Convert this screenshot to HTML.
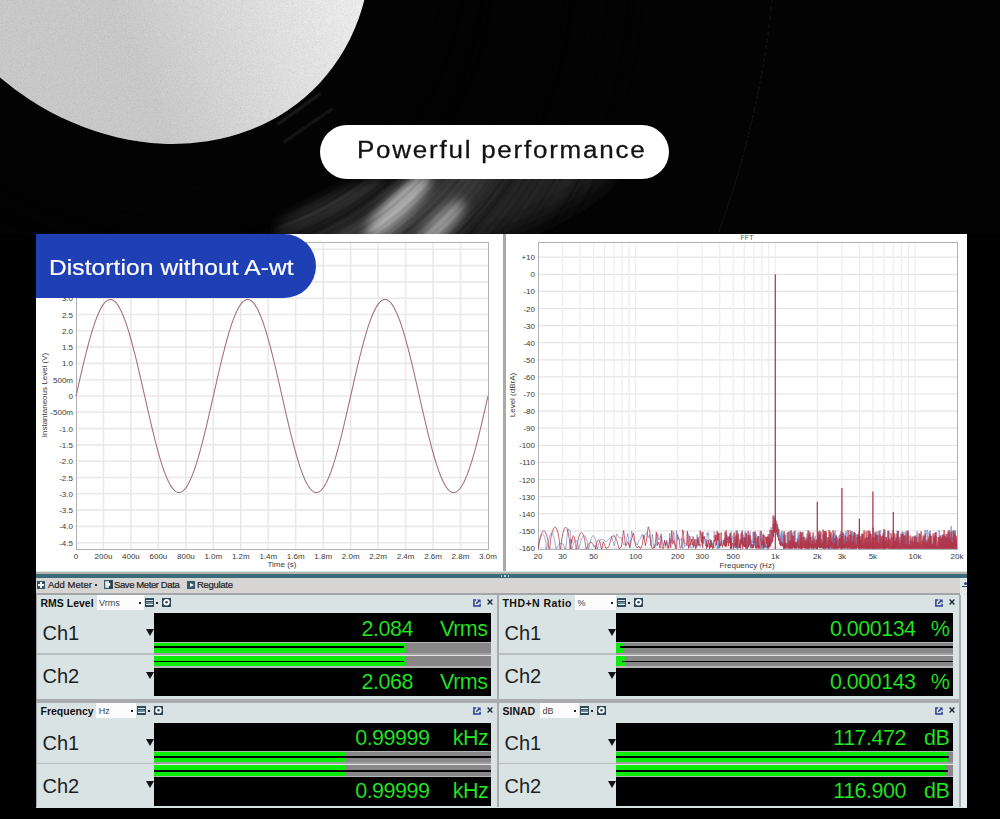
<!DOCTYPE html><html><head><meta charset="utf-8"><style>
*{margin:0;padding:0;box-sizing:border-box}
html,body{width:1000px;height:819px;overflow:hidden;background:#000}
body{position:relative;font-family:"Liberation Sans",sans-serif}
.a{position:absolute}

</style></head><body>
<svg class="a" style="left:0;top:0" width="1000" height="234" viewBox="0 0 1000 234">
<defs>
<linearGradient id="lab" gradientUnits="userSpaceOnUse" x1="30" y1="10" x2="310" y2="150">
<stop offset="0" stop-color="#cdcdcd"/><stop offset="0.45" stop-color="#e4e4e4"/><stop offset="1" stop-color="#fdfdfd"/>
</linearGradient>
<filter id="tex" x="0" y="0" width="100%" height="100%"><feTurbulence type="fractalNoise" baseFrequency="0.9" numOctaves="2" seed="3"/><feColorMatrix type="matrix" values="0 0 0 0 0  0 0 0 0 0  0 0 0 0 0  0 0 0 -1.2 0.75"/><feComposite in2="SourceGraphic" operator="in"/></filter>
<filter id="bl10" x="-50%" y="-50%" width="200%" height="200%"><feGaussianBlur stdDeviation="12"/></filter>
<filter id="bl6" x="-50%" y="-50%" width="200%" height="200%"><feGaussianBlur stdDeviation="6"/></filter>
<filter id="bl3" x="-50%" y="-50%" width="200%" height="200%"><feGaussianBlur stdDeviation="3"/></filter>
<filter id="bl07" x="-10%" y="-10%" width="120%" height="120%"><feGaussianBlur stdDeviation="0.8"/></filter>
<filter id="bl1" x="-50%" y="-50%" width="200%" height="200%"><feGaussianBlur stdDeviation="1"/></filter>
</defs>
<rect width="1000" height="234" fill="#030304"/>
<ellipse cx="136" cy="-88" rx="214" ry="251" transform="rotate(-47 136 -88)" fill="url(#lab)"/>
<ellipse cx="136" cy="-88" rx="214" ry="251" transform="rotate(-47 136 -88)" fill="#000" filter="url(#tex)" opacity="0.16"/>

<g filter="url(#bl10)">
<ellipse cx="430" cy="220" rx="190" ry="38" transform="rotate(-18 430 220)" fill="#262626"/>
<ellipse cx="405" cy="212" rx="100" ry="26" transform="rotate(-28 405 212)" fill="#3c3c3c"/>
</g>
<g filter="url(#bl6)">
<ellipse cx="398" cy="207" rx="44" ry="13" transform="rotate(-46 398 207)" fill="#b0b0b0"/>
<ellipse cx="440" cy="226" rx="34" ry="10" transform="rotate(-46 440 226)" fill="#a0a0a0"/>
<ellipse cx="330" cy="205" rx="60" ry="8" transform="rotate(-25 330 205)" fill="#3a3a3a"/>
</g>
<g filter="url(#bl07)"><ellipse cx="136" cy="-88" rx="254.0" ry="295.0" transform="rotate(-47 136 -88)" fill="none" stroke="#000" stroke-width="1.6" opacity="0.35"/><ellipse cx="136" cy="-88" rx="259.7" ry="301.3" transform="rotate(-47 136 -88)" fill="none" stroke="#000" stroke-width="1.5" opacity="0.36"/><ellipse cx="136" cy="-88" rx="264.3" ry="306.3" transform="rotate(-47 136 -88)" fill="none" stroke="#000" stroke-width="1.5" opacity="0.23"/><ellipse cx="136" cy="-88" rx="269.0" ry="311.5" transform="rotate(-47 136 -88)" fill="none" stroke="#000" stroke-width="0.9" opacity="0.51"/><ellipse cx="136" cy="-88" rx="272.6" ry="315.4" transform="rotate(-47 136 -88)" fill="none" stroke="#000" stroke-width="1.9" opacity="0.19"/><ellipse cx="136" cy="-88" rx="277.5" ry="320.8" transform="rotate(-47 136 -88)" fill="none" stroke="#000" stroke-width="2.2" opacity="0.17"/><ellipse cx="136" cy="-88" rx="283.4" ry="327.3" transform="rotate(-47 136 -88)" fill="none" stroke="#000" stroke-width="1.7" opacity="0.44"/><ellipse cx="136" cy="-88" rx="286.4" ry="330.7" transform="rotate(-47 136 -88)" fill="none" stroke="#000" stroke-width="1.5" opacity="0.16"/><ellipse cx="136" cy="-88" rx="289.1" ry="333.6" transform="rotate(-47 136 -88)" fill="none" stroke="#000" stroke-width="1.1" opacity="0.24"/><ellipse cx="136" cy="-88" rx="291.7" ry="336.5" transform="rotate(-47 136 -88)" fill="none" stroke="#000" stroke-width="1.4" opacity="0.36"/><ellipse cx="136" cy="-88" rx="297.2" ry="342.5" transform="rotate(-47 136 -88)" fill="none" stroke="#000" stroke-width="1.7" opacity="0.38"/><ellipse cx="136" cy="-88" rx="301.4" ry="347.2" transform="rotate(-47 136 -88)" fill="none" stroke="#000" stroke-width="1.4" opacity="0.45"/><ellipse cx="136" cy="-88" rx="304.9" ry="351.0" transform="rotate(-47 136 -88)" fill="none" stroke="#000" stroke-width="2.2" opacity="0.60"/><ellipse cx="136" cy="-88" rx="310.3" ry="357.0" transform="rotate(-47 136 -88)" fill="none" stroke="#000" stroke-width="1.2" opacity="0.47"/><ellipse cx="136" cy="-88" rx="313.6" ry="360.6" transform="rotate(-47 136 -88)" fill="none" stroke="#000" stroke-width="0.9" opacity="0.28"/><ellipse cx="136" cy="-88" rx="318.8" ry="366.3" transform="rotate(-47 136 -88)" fill="none" stroke="#000" stroke-width="2.0" opacity="0.33"/><ellipse cx="136" cy="-88" rx="322.7" ry="370.5" transform="rotate(-47 136 -88)" fill="none" stroke="#000" stroke-width="2.0" opacity="0.58"/><ellipse cx="136" cy="-88" rx="325.2" ry="373.3" transform="rotate(-47 136 -88)" fill="none" stroke="#000" stroke-width="2.1" opacity="0.24"/><ellipse cx="136" cy="-88" rx="329.3" ry="377.9" transform="rotate(-47 136 -88)" fill="none" stroke="#000" stroke-width="1.4" opacity="0.59"/><ellipse cx="136" cy="-88" rx="332.1" ry="380.9" transform="rotate(-47 136 -88)" fill="none" stroke="#000" stroke-width="1.9" opacity="0.43"/><ellipse cx="136" cy="-88" rx="335.5" ry="384.7" transform="rotate(-47 136 -88)" fill="none" stroke="#000" stroke-width="1.3" opacity="0.19"/><ellipse cx="136" cy="-88" rx="341.4" ry="391.1" transform="rotate(-47 136 -88)" fill="none" stroke="#000" stroke-width="1.0" opacity="0.49"/><ellipse cx="136" cy="-88" rx="344.8" ry="394.8" transform="rotate(-47 136 -88)" fill="none" stroke="#000" stroke-width="0.9" opacity="0.20"/><ellipse cx="136" cy="-88" rx="350.0" ry="400.7" transform="rotate(-47 136 -88)" fill="none" stroke="#000" stroke-width="1.6" opacity="0.23"/><ellipse cx="136" cy="-88" rx="354.1" ry="405.1" transform="rotate(-47 136 -88)" fill="none" stroke="#000" stroke-width="1.8" opacity="0.24"/><ellipse cx="136" cy="-88" rx="357.1" ry="408.4" transform="rotate(-47 136 -88)" fill="none" stroke="#000" stroke-width="1.0" opacity="0.44"/><ellipse cx="136" cy="-88" rx="361.0" ry="412.8" transform="rotate(-47 136 -88)" fill="none" stroke="#000" stroke-width="1.2" opacity="0.25"/><ellipse cx="136" cy="-88" rx="366.9" ry="419.2" transform="rotate(-47 136 -88)" fill="none" stroke="#000" stroke-width="1.2" opacity="0.51"/><ellipse cx="136" cy="-88" rx="372.5" ry="425.4" transform="rotate(-47 136 -88)" fill="none" stroke="#000" stroke-width="1.4" opacity="0.24"/><ellipse cx="136" cy="-88" rx="378.0" ry="431.4" transform="rotate(-47 136 -88)" fill="none" stroke="#000" stroke-width="0.9" opacity="0.44"/><ellipse cx="136" cy="-88" rx="384.0" ry="438.0" transform="rotate(-47 136 -88)" fill="none" stroke="#000" stroke-width="1.2" opacity="0.25"/><ellipse cx="136" cy="-88" rx="389.2" ry="443.7" transform="rotate(-47 136 -88)" fill="none" stroke="#000" stroke-width="1.2" opacity="0.30"/><ellipse cx="136" cy="-88" rx="392.0" ry="446.8" transform="rotate(-47 136 -88)" fill="none" stroke="#000" stroke-width="1.6" opacity="0.19"/><ellipse cx="136" cy="-88" rx="395.3" ry="450.4" transform="rotate(-47 136 -88)" fill="none" stroke="#000" stroke-width="1.3" opacity="0.42"/><ellipse cx="136" cy="-88" rx="399.4" ry="454.9" transform="rotate(-47 136 -88)" fill="none" stroke="#000" stroke-width="1.5" opacity="0.58"/><ellipse cx="136" cy="-88" rx="403.9" ry="459.9" transform="rotate(-47 136 -88)" fill="none" stroke="#000" stroke-width="1.1" opacity="0.54"/><ellipse cx="136" cy="-88" rx="406.9" ry="463.2" transform="rotate(-47 136 -88)" fill="none" stroke="#000" stroke-width="1.9" opacity="0.56"/><ellipse cx="136" cy="-88" rx="410.3" ry="466.9" transform="rotate(-47 136 -88)" fill="none" stroke="#000" stroke-width="1.8" opacity="0.24"/><ellipse cx="136" cy="-88" rx="416.1" ry="473.3" transform="rotate(-47 136 -88)" fill="none" stroke="#000" stroke-width="2.1" opacity="0.24"/><ellipse cx="136" cy="-88" rx="421.7" ry="479.5" transform="rotate(-47 136 -88)" fill="none" stroke="#000" stroke-width="1.4" opacity="0.42"/><ellipse cx="136" cy="-88" rx="424.6" ry="482.6" transform="rotate(-47 136 -88)" fill="none" stroke="#000" stroke-width="2.1" opacity="0.17"/><ellipse cx="136" cy="-88" rx="427.9" ry="486.3" transform="rotate(-47 136 -88)" fill="none" stroke="#000" stroke-width="1.2" opacity="0.47"/><ellipse cx="136" cy="-88" rx="433.3" ry="492.2" transform="rotate(-47 136 -88)" fill="none" stroke="#000" stroke-width="1.2" opacity="0.42"/><ellipse cx="136" cy="-88" rx="436.4" ry="495.6" transform="rotate(-47 136 -88)" fill="none" stroke="#000" stroke-width="0.9" opacity="0.47"/><ellipse cx="136" cy="-88" rx="439.7" ry="499.3" transform="rotate(-47 136 -88)" fill="none" stroke="#000" stroke-width="2.0" opacity="0.40"/><ellipse cx="136" cy="-88" rx="444.3" ry="504.4" transform="rotate(-47 136 -88)" fill="none" stroke="#000" stroke-width="2.1" opacity="0.28"/><ellipse cx="136" cy="-88" rx="447.6" ry="507.9" transform="rotate(-47 136 -88)" fill="none" stroke="#000" stroke-width="1.2" opacity="0.16"/><ellipse cx="136" cy="-88" rx="451.6" ry="512.4" transform="rotate(-47 136 -88)" fill="none" stroke="#000" stroke-width="1.0" opacity="0.18"/><ellipse cx="136" cy="-88" rx="455.4" ry="516.5" transform="rotate(-47 136 -88)" fill="none" stroke="#000" stroke-width="1.0" opacity="0.41"/><ellipse cx="136" cy="-88" rx="459.2" ry="520.7" transform="rotate(-47 136 -88)" fill="none" stroke="#000" stroke-width="2.2" opacity="0.55"/><ellipse cx="136" cy="-88" rx="464.0" ry="526.0" transform="rotate(-47 136 -88)" fill="none" stroke="#000" stroke-width="1.6" opacity="0.46"/><ellipse cx="136" cy="-88" rx="467.0" ry="529.3" transform="rotate(-47 136 -88)" fill="none" stroke="#000" stroke-width="0.8" opacity="0.17"/><ellipse cx="136" cy="-88" rx="472.6" ry="535.5" transform="rotate(-47 136 -88)" fill="none" stroke="#000" stroke-width="2.1" opacity="0.47"/></g>
<g filter="url(#bl1)" stroke-linecap="round">
<line x1="278" y1="124" x2="320" y2="94" stroke="#3a3a3a" stroke-width="1.5"/>
<line x1="284" y1="142" x2="332" y2="109" stroke="#303030" stroke-width="1.5"/>
</g>
<path d="M772 0 Q760 120 718 234" fill="none" stroke="#101010" stroke-width="1.5" filter="url(#bl1)"/>
</svg>
<div class="a" style="left:320px;top:125px;width:349px;height:54px;border-radius:27px;background:#fff"></div>
<div class="a" style="left:357px;top:134px;font-size:26px;letter-spacing:1.75px;color:#111;-webkit-text-stroke:0.3px #111;white-space:nowrap;line-height:30px;transform:scaleY(0.905);transform-origin:0 23px">Powerful performance</div>
<div class="a" style="left:36px;top:234px;width:931px;height:338px;background:#fff"></div>
<div class="a" style="left:503px;top:234px;width:3px;height:338px;background:#a9a9a9"></div>
<svg class="a" style="left:0;top:0" width="1000" height="819" viewBox="0 0 1000 819"><line x1="76" x2="488" y1="542.7" y2="542.7" stroke="#e9e9e9" stroke-width="1.6"/><line x1="76" x2="488" y1="526.4" y2="526.4" stroke="#e9e9e9" stroke-width="1.6"/><line x1="76" x2="488" y1="510.1" y2="510.1" stroke="#e9e9e9" stroke-width="1.6"/><line x1="76" x2="488" y1="493.8" y2="493.8" stroke="#e9e9e9" stroke-width="1.6"/><line x1="76" x2="488" y1="477.5" y2="477.5" stroke="#e9e9e9" stroke-width="1.6"/><line x1="76" x2="488" y1="461.2" y2="461.2" stroke="#e9e9e9" stroke-width="1.6"/><line x1="76" x2="488" y1="444.9" y2="444.9" stroke="#e9e9e9" stroke-width="1.6"/><line x1="76" x2="488" y1="428.6" y2="428.6" stroke="#e9e9e9" stroke-width="1.6"/><line x1="76" x2="488" y1="412.3" y2="412.3" stroke="#e9e9e9" stroke-width="1.6"/><line x1="76" x2="488" y1="396.0" y2="396.0" stroke="#e9e9e9" stroke-width="1.6"/><line x1="76" x2="488" y1="379.7" y2="379.7" stroke="#e9e9e9" stroke-width="1.6"/><line x1="76" x2="488" y1="363.4" y2="363.4" stroke="#e9e9e9" stroke-width="1.6"/><line x1="76" x2="488" y1="347.1" y2="347.1" stroke="#e9e9e9" stroke-width="1.6"/><line x1="76" x2="488" y1="330.8" y2="330.8" stroke="#e9e9e9" stroke-width="1.6"/><line x1="76" x2="488" y1="314.5" y2="314.5" stroke="#e9e9e9" stroke-width="1.6"/><line x1="76" x2="488" y1="298.2" y2="298.2" stroke="#e9e9e9" stroke-width="1.6"/><line x1="76" x2="488" y1="281.9" y2="281.9" stroke="#e9e9e9" stroke-width="1.6"/><line x1="76" x2="488" y1="265.6" y2="265.6" stroke="#e9e9e9" stroke-width="1.6"/><line x1="76" x2="488" y1="249.3" y2="249.3" stroke="#e9e9e9" stroke-width="1.6"/><line x1="103.5" x2="103.5" y1="243" y2="549" stroke="#e9e9e9" stroke-width="1.6"/><line x1="130.9" x2="130.9" y1="243" y2="549" stroke="#e9e9e9" stroke-width="1.6"/><line x1="158.4" x2="158.4" y1="243" y2="549" stroke="#e9e9e9" stroke-width="1.6"/><line x1="185.9" x2="185.9" y1="243" y2="549" stroke="#e9e9e9" stroke-width="1.6"/><line x1="213.3" x2="213.3" y1="243" y2="549" stroke="#e9e9e9" stroke-width="1.6"/><line x1="240.8" x2="240.8" y1="243" y2="549" stroke="#e9e9e9" stroke-width="1.6"/><line x1="268.3" x2="268.3" y1="243" y2="549" stroke="#e9e9e9" stroke-width="1.6"/><line x1="295.7" x2="295.7" y1="243" y2="549" stroke="#e9e9e9" stroke-width="1.6"/><line x1="323.2" x2="323.2" y1="243" y2="549" stroke="#e9e9e9" stroke-width="1.6"/><line x1="350.7" x2="350.7" y1="243" y2="549" stroke="#e9e9e9" stroke-width="1.6"/><line x1="378.1" x2="378.1" y1="243" y2="549" stroke="#e9e9e9" stroke-width="1.6"/><line x1="405.6" x2="405.6" y1="243" y2="549" stroke="#e9e9e9" stroke-width="1.6"/><line x1="433.1" x2="433.1" y1="243" y2="549" stroke="#e9e9e9" stroke-width="1.6"/><line x1="460.5" x2="460.5" y1="243" y2="549" stroke="#e9e9e9" stroke-width="1.6"/><rect x="76.5" y="242.5" width="412" height="307" fill="none" stroke="#b0b0b0" stroke-width="1"/><polyline fill="none" stroke="#a26c7c" stroke-width="1.05" points="76,396.0 77,391.6 78,387.2 79,382.8 80,378.4 81,374.1 82,369.8 83,365.6 84,361.5 85,357.4 86,353.4 87,349.5 88,345.6 89,341.9 90,338.3 91,334.9 92,331.5 93,328.3 94,325.2 95,322.3 96,319.5 97,316.9 98,314.5 99,312.2 100,310.1 101,308.2 102,306.4 103,304.9 104,303.5 105,302.4 106,301.4 107,300.6 108,300.1 109,299.7 110,299.5 111,299.5 112,299.8 113,300.2 114,300.9 115,301.7 116,302.7 117,304.0 118,305.4 119,307.0 120,308.8 121,310.8 122,312.9 123,315.3 124,317.8 125,320.4 126,323.2 127,326.2 128,329.3 129,332.6 130,336.0 131,339.5 132,343.2 133,346.9 134,350.8 135,354.7 136,358.7 137,362.8 138,367.0 139,371.3 140,375.6 141,379.9 142,384.3 143,388.6 144,393.1 145,397.5 146,401.9 147,406.3 148,410.7 149,415.0 150,419.3 151,423.6 152,427.8 153,431.9 154,436.0 155,439.9 156,443.8 157,447.6 158,451.3 159,454.8 160,458.3 161,461.6 162,464.8 163,467.8 164,470.7 165,473.4 166,475.9 167,478.3 168,480.5 169,482.6 170,484.4 171,486.1 172,487.6 173,488.9 174,490.0 175,490.9 176,491.6 177,492.1 178,492.4 179,492.5 180,492.4 181,492.1 182,491.6 183,490.9 184,490.0 185,488.9 186,487.6 187,486.1 188,484.4 189,482.6 190,480.5 191,478.3 192,475.9 193,473.4 194,470.7 195,467.8 196,464.8 197,461.6 198,458.3 199,454.8 200,451.3 201,447.6 202,443.8 203,439.9 204,436.0 205,431.9 206,427.8 207,423.6 208,419.3 209,415.0 210,410.7 211,406.3 212,401.9 213,397.5 214,393.1 215,388.6 216,384.3 217,379.9 218,375.6 219,371.3 220,367.0 221,362.8 222,358.7 223,354.7 224,350.8 225,346.9 226,343.2 227,339.5 228,336.0 229,332.6 230,329.3 231,326.2 232,323.2 233,320.4 234,317.8 235,315.3 236,312.9 237,310.8 238,308.8 239,307.0 240,305.4 241,304.0 242,302.7 243,301.7 244,300.9 245,300.2 246,299.8 247,299.5 248,299.5 249,299.7 250,300.1 251,300.6 252,301.4 253,302.4 254,303.5 255,304.9 256,306.4 257,308.2 258,310.1 259,312.2 260,314.5 261,316.9 262,319.5 263,322.3 264,325.2 265,328.3 266,331.5 267,334.9 268,338.3 269,341.9 270,345.6 271,349.5 272,353.4 273,357.4 274,361.5 275,365.6 276,369.8 277,374.1 278,378.4 279,382.8 280,387.2 281,391.6 282,396.0 283,400.4 284,404.8 285,409.2 286,413.6 287,417.9 288,422.2 289,426.4 290,430.5 291,434.6 292,438.6 293,442.5 294,446.4 295,450.1 296,453.7 297,457.1 298,460.5 299,463.7 300,466.8 301,469.7 302,472.5 303,475.1 304,477.5 305,479.8 306,481.9 307,483.8 308,485.6 309,487.1 310,488.5 311,489.6 312,490.6 313,491.4 314,491.9 315,492.3 316,492.5 317,492.5 318,492.2 319,491.8 320,491.1 321,490.3 322,489.3 323,488.0 324,486.6 325,485.0 326,483.2 327,481.2 328,479.1 329,476.7 330,474.2 331,471.6 332,468.8 333,465.8 334,462.7 335,459.4 336,456.0 337,452.5 338,448.8 339,445.1 340,441.2 341,437.3 342,433.3 343,429.2 344,425.0 345,420.7 346,416.4 347,412.1 348,407.7 349,403.4 350,398.9 351,394.5 352,390.1 353,385.7 354,381.3 355,377.0 356,372.7 357,368.4 358,364.2 359,360.1 360,356.0 361,352.1 362,348.2 363,344.4 364,340.7 365,337.2 366,333.7 367,330.4 368,327.2 369,324.2 370,321.3 371,318.6 372,316.1 373,313.7 374,311.5 375,309.4 376,307.6 377,305.9 378,304.4 379,303.1 380,302.0 381,301.1 382,300.4 383,299.9 384,299.6 385,299.5 386,299.6 387,299.9 388,300.4 389,301.1 390,302.0 391,303.1 392,304.4 393,305.9 394,307.6 395,309.4 396,311.5 397,313.7 398,316.1 399,318.6 400,321.3 401,324.2 402,327.2 403,330.4 404,333.7 405,337.2 406,340.7 407,344.4 408,348.2 409,352.1 410,356.0 411,360.1 412,364.2 413,368.4 414,372.7 415,377.0 416,381.3 417,385.7 418,390.1 419,394.5 420,398.9 421,403.4 422,407.7 423,412.1 424,416.4 425,420.7 426,425.0 427,429.2 428,433.3 429,437.3 430,441.2 431,445.1 432,448.8 433,452.5 434,456.0 435,459.4 436,462.7 437,465.8 438,468.8 439,471.6 440,474.2 441,476.7 442,479.1 443,481.2 444,483.2 445,485.0 446,486.6 447,488.0 448,489.3 449,490.3 450,491.1 451,491.8 452,492.2 453,492.5 454,492.5 455,492.3 456,491.9 457,491.4 458,490.6 459,489.6 460,488.5 461,487.1 462,485.6 463,483.8 464,481.9 465,479.8 466,477.5 467,475.1 468,472.5 469,469.7 470,466.8 471,463.7 472,460.5 473,457.1 474,453.7 475,450.1 476,446.4 477,442.5 478,438.6 479,434.6 480,430.5 481,426.4 482,422.2 483,417.9 484,413.6 485,409.2 486,404.8 487,400.4 488,396.0"/><text x="73" y="301.2" font-size="8" fill="#3a3a3a" text-anchor="end" font-family="Liberation Sans">3.0</text><text x="73" y="317.5" font-size="8" fill="#3a3a3a" text-anchor="end" font-family="Liberation Sans">2.5</text><text x="73" y="333.8" font-size="8" fill="#3a3a3a" text-anchor="end" font-family="Liberation Sans">2.0</text><text x="73" y="350.1" font-size="8" fill="#3a3a3a" text-anchor="end" font-family="Liberation Sans">1.5</text><text x="73" y="366.4" font-size="8" fill="#3a3a3a" text-anchor="end" font-family="Liberation Sans">1.0</text><text x="73" y="382.7" font-size="8" fill="#3a3a3a" text-anchor="end" font-family="Liberation Sans">500m</text><text x="73" y="399.0" font-size="8" fill="#3a3a3a" text-anchor="end" font-family="Liberation Sans">0</text><text x="73" y="415.3" font-size="8" fill="#3a3a3a" text-anchor="end" font-family="Liberation Sans">-500m</text><text x="73" y="431.6" font-size="8" fill="#3a3a3a" text-anchor="end" font-family="Liberation Sans">-1.0</text><text x="73" y="447.9" font-size="8" fill="#3a3a3a" text-anchor="end" font-family="Liberation Sans">-1.5</text><text x="73" y="464.2" font-size="8" fill="#3a3a3a" text-anchor="end" font-family="Liberation Sans">-2.0</text><text x="73" y="480.5" font-size="8" fill="#3a3a3a" text-anchor="end" font-family="Liberation Sans">-2.5</text><text x="73" y="496.8" font-size="8" fill="#3a3a3a" text-anchor="end" font-family="Liberation Sans">-3.0</text><text x="73" y="513.1" font-size="8" fill="#3a3a3a" text-anchor="end" font-family="Liberation Sans">-3.5</text><text x="73" y="529.4" font-size="8" fill="#3a3a3a" text-anchor="end" font-family="Liberation Sans">-4.0</text><text x="73" y="545.7" font-size="8" fill="#3a3a3a" text-anchor="end" font-family="Liberation Sans">-4.5</text><text x="76.0" y="559" font-size="8" fill="#3a3a3a" text-anchor="middle" font-family="Liberation Sans">0</text><text x="103.5" y="559" font-size="8" fill="#3a3a3a" text-anchor="middle" font-family="Liberation Sans">200u</text><text x="130.9" y="559" font-size="8" fill="#3a3a3a" text-anchor="middle" font-family="Liberation Sans">400u</text><text x="158.4" y="559" font-size="8" fill="#3a3a3a" text-anchor="middle" font-family="Liberation Sans">600u</text><text x="185.9" y="559" font-size="8" fill="#3a3a3a" text-anchor="middle" font-family="Liberation Sans">800u</text><text x="213.3" y="559" font-size="8" fill="#3a3a3a" text-anchor="middle" font-family="Liberation Sans">1.0m</text><text x="240.8" y="559" font-size="8" fill="#3a3a3a" text-anchor="middle" font-family="Liberation Sans">1.2m</text><text x="268.3" y="559" font-size="8" fill="#3a3a3a" text-anchor="middle" font-family="Liberation Sans">1.4m</text><text x="295.7" y="559" font-size="8" fill="#3a3a3a" text-anchor="middle" font-family="Liberation Sans">1.6m</text><text x="323.2" y="559" font-size="8" fill="#3a3a3a" text-anchor="middle" font-family="Liberation Sans">1.8m</text><text x="350.7" y="559" font-size="8" fill="#3a3a3a" text-anchor="middle" font-family="Liberation Sans">2.0m</text><text x="378.1" y="559" font-size="8" fill="#3a3a3a" text-anchor="middle" font-family="Liberation Sans">2.2m</text><text x="405.6" y="559" font-size="8" fill="#3a3a3a" text-anchor="middle" font-family="Liberation Sans">2.4m</text><text x="433.1" y="559" font-size="8" fill="#3a3a3a" text-anchor="middle" font-family="Liberation Sans">2.6m</text><text x="460.5" y="559" font-size="8" fill="#3a3a3a" text-anchor="middle" font-family="Liberation Sans">2.8m</text><text x="488.0" y="559" font-size="8" fill="#3a3a3a" text-anchor="middle" font-family="Liberation Sans">3.0m</text><text x="282" y="567" font-size="8" fill="#3a3a3a" text-anchor="middle" font-family="Liberation Sans">Time (s)</text><text x="0" y="0" font-size="8" fill="#3a3a3a" text-anchor="middle" font-family="Liberation Sans" transform="translate(47 395) rotate(-90)">Instantaneous Level (V)</text><line x1="538" x2="957" y1="257.2" y2="257.2" stroke="#e4e4e4" stroke-width="1.2"/><line x1="538" x2="957" y1="274.3" y2="274.3" stroke="#e4e4e4" stroke-width="1.2"/><line x1="538" x2="957" y1="291.4" y2="291.4" stroke="#e4e4e4" stroke-width="1.2"/><line x1="538" x2="957" y1="308.5" y2="308.5" stroke="#e4e4e4" stroke-width="1.2"/><line x1="538" x2="957" y1="325.6" y2="325.6" stroke="#e4e4e4" stroke-width="1.2"/><line x1="538" x2="957" y1="342.7" y2="342.7" stroke="#e4e4e4" stroke-width="1.2"/><line x1="538" x2="957" y1="359.8" y2="359.8" stroke="#e4e4e4" stroke-width="1.2"/><line x1="538" x2="957" y1="376.9" y2="376.9" stroke="#e4e4e4" stroke-width="1.2"/><line x1="538" x2="957" y1="394.0" y2="394.0" stroke="#e4e4e4" stroke-width="1.2"/><line x1="538" x2="957" y1="411.1" y2="411.1" stroke="#e4e4e4" stroke-width="1.2"/><line x1="538" x2="957" y1="428.2" y2="428.2" stroke="#e4e4e4" stroke-width="1.2"/><line x1="538" x2="957" y1="445.3" y2="445.3" stroke="#e4e4e4" stroke-width="1.2"/><line x1="538" x2="957" y1="462.4" y2="462.4" stroke="#e4e4e4" stroke-width="1.2"/><line x1="538" x2="957" y1="479.5" y2="479.5" stroke="#e4e4e4" stroke-width="1.2"/><line x1="538" x2="957" y1="496.6" y2="496.6" stroke="#e4e4e4" stroke-width="1.2"/><line x1="538" x2="957" y1="513.7" y2="513.7" stroke="#e4e4e4" stroke-width="1.2"/><line x1="538" x2="957" y1="530.8" y2="530.8" stroke="#e4e4e4" stroke-width="1.2"/><line x1="538" x2="957" y1="547.9" y2="547.9" stroke="#e4e4e4" stroke-width="1.2"/><line x1="562.6" x2="562.6" y1="243" y2="549" stroke="#eeeeee" stroke-width="1.3"/><line x1="580.0" x2="580.0" y1="243" y2="549" stroke="#eeeeee" stroke-width="1.3"/><line x1="593.6" x2="593.6" y1="243" y2="549" stroke="#eeeeee" stroke-width="1.3"/><line x1="604.6" x2="604.6" y1="243" y2="549" stroke="#eeeeee" stroke-width="1.3"/><line x1="614.0" x2="614.0" y1="243" y2="549" stroke="#eeeeee" stroke-width="1.3"/><line x1="622.1" x2="622.1" y1="243" y2="549" stroke="#eeeeee" stroke-width="1.3"/><line x1="629.2" x2="629.2" y1="243" y2="549" stroke="#eeeeee" stroke-width="1.3"/><line x1="635.6" x2="635.6" y1="243" y2="549" stroke="#eeeeee" stroke-width="1.3"/><line x1="677.7" x2="677.7" y1="243" y2="549" stroke="#eeeeee" stroke-width="1.3"/><line x1="702.3" x2="702.3" y1="243" y2="549" stroke="#eeeeee" stroke-width="1.3"/><line x1="719.7" x2="719.7" y1="243" y2="549" stroke="#eeeeee" stroke-width="1.3"/><line x1="733.3" x2="733.3" y1="243" y2="549" stroke="#eeeeee" stroke-width="1.3"/><line x1="744.3" x2="744.3" y1="243" y2="549" stroke="#eeeeee" stroke-width="1.3"/><line x1="753.7" x2="753.7" y1="243" y2="549" stroke="#eeeeee" stroke-width="1.3"/><line x1="761.8" x2="761.8" y1="243" y2="549" stroke="#eeeeee" stroke-width="1.3"/><line x1="768.9" x2="768.9" y1="243" y2="549" stroke="#eeeeee" stroke-width="1.3"/><line x1="775.3" x2="775.3" y1="243" y2="549" stroke="#eeeeee" stroke-width="1.3"/><line x1="817.3" x2="817.3" y1="243" y2="549" stroke="#eeeeee" stroke-width="1.3"/><line x1="841.9" x2="841.9" y1="243" y2="549" stroke="#eeeeee" stroke-width="1.3"/><line x1="859.4" x2="859.4" y1="243" y2="549" stroke="#eeeeee" stroke-width="1.3"/><line x1="872.9" x2="872.9" y1="243" y2="549" stroke="#eeeeee" stroke-width="1.3"/><line x1="884.0" x2="884.0" y1="243" y2="549" stroke="#eeeeee" stroke-width="1.3"/><line x1="893.3" x2="893.3" y1="243" y2="549" stroke="#eeeeee" stroke-width="1.3"/><line x1="901.4" x2="901.4" y1="243" y2="549" stroke="#eeeeee" stroke-width="1.3"/><line x1="908.6" x2="908.6" y1="243" y2="549" stroke="#eeeeee" stroke-width="1.3"/><line x1="915.0" x2="915.0" y1="243" y2="549" stroke="#eeeeee" stroke-width="1.3"/><rect x="538.5" y="242.5" width="419" height="307" fill="none" stroke="#b0b0b0" stroke-width="1"/><text x="535" y="260.2" font-size="8" fill="#3a3a3a" text-anchor="end" font-family="Liberation Sans">+10</text><text x="535" y="277.3" font-size="8" fill="#3a3a3a" text-anchor="end" font-family="Liberation Sans">0</text><text x="535" y="294.4" font-size="8" fill="#3a3a3a" text-anchor="end" font-family="Liberation Sans">-10</text><text x="535" y="311.5" font-size="8" fill="#3a3a3a" text-anchor="end" font-family="Liberation Sans">-20</text><text x="535" y="328.6" font-size="8" fill="#3a3a3a" text-anchor="end" font-family="Liberation Sans">-30</text><text x="535" y="345.7" font-size="8" fill="#3a3a3a" text-anchor="end" font-family="Liberation Sans">-40</text><text x="535" y="362.8" font-size="8" fill="#3a3a3a" text-anchor="end" font-family="Liberation Sans">-50</text><text x="535" y="379.9" font-size="8" fill="#3a3a3a" text-anchor="end" font-family="Liberation Sans">-60</text><text x="535" y="397.0" font-size="8" fill="#3a3a3a" text-anchor="end" font-family="Liberation Sans">-70</text><text x="535" y="414.1" font-size="8" fill="#3a3a3a" text-anchor="end" font-family="Liberation Sans">-80</text><text x="535" y="431.2" font-size="8" fill="#3a3a3a" text-anchor="end" font-family="Liberation Sans">-90</text><text x="535" y="448.3" font-size="8" fill="#3a3a3a" text-anchor="end" font-family="Liberation Sans">-100</text><text x="535" y="465.4" font-size="8" fill="#3a3a3a" text-anchor="end" font-family="Liberation Sans">-110</text><text x="535" y="482.5" font-size="8" fill="#3a3a3a" text-anchor="end" font-family="Liberation Sans">-120</text><text x="535" y="499.6" font-size="8" fill="#3a3a3a" text-anchor="end" font-family="Liberation Sans">-130</text><text x="535" y="516.7" font-size="8" fill="#3a3a3a" text-anchor="end" font-family="Liberation Sans">-140</text><text x="535" y="533.8" font-size="8" fill="#3a3a3a" text-anchor="end" font-family="Liberation Sans">-150</text><text x="535" y="550.9" font-size="8" fill="#3a3a3a" text-anchor="end" font-family="Liberation Sans">-160</text><text x="538.0" y="559" font-size="8" fill="#3a3a3a" text-anchor="middle" font-family="Liberation Sans">20</text><text x="562.6" y="559" font-size="8" fill="#3a3a3a" text-anchor="middle" font-family="Liberation Sans">30</text><text x="593.6" y="559" font-size="8" fill="#3a3a3a" text-anchor="middle" font-family="Liberation Sans">50</text><text x="635.6" y="559" font-size="8" fill="#3a3a3a" text-anchor="middle" font-family="Liberation Sans">100</text><text x="677.7" y="559" font-size="8" fill="#3a3a3a" text-anchor="middle" font-family="Liberation Sans">200</text><text x="702.3" y="559" font-size="8" fill="#3a3a3a" text-anchor="middle" font-family="Liberation Sans">300</text><text x="733.3" y="559" font-size="8" fill="#3a3a3a" text-anchor="middle" font-family="Liberation Sans">500</text><text x="775.3" y="559" font-size="8" fill="#3a3a3a" text-anchor="middle" font-family="Liberation Sans">1k</text><text x="817.3" y="559" font-size="8" fill="#3a3a3a" text-anchor="middle" font-family="Liberation Sans">2k</text><text x="841.9" y="559" font-size="8" fill="#3a3a3a" text-anchor="middle" font-family="Liberation Sans">3k</text><text x="872.9" y="559" font-size="8" fill="#3a3a3a" text-anchor="middle" font-family="Liberation Sans">5k</text><text x="915.0" y="559" font-size="8" fill="#3a3a3a" text-anchor="middle" font-family="Liberation Sans">10k</text><text x="957.0" y="559" font-size="8" fill="#3a3a3a" text-anchor="middle" font-family="Liberation Sans">20k</text><text x="747" y="568" font-size="8" fill="#3a3a3a" text-anchor="middle" font-family="Liberation Sans">Frequency (Hz)</text><text x="747" y="240" font-size="7" fill="#555" text-anchor="middle" font-family="Liberation Sans">FFT</text><text x="0" y="0" font-size="8" fill="#3a3a3a" text-anchor="middle" font-family="Liberation Sans" transform="translate(515 395) rotate(-90)">Level (dBrA)</text><svg x="538" y="243" width="419" height="306" viewBox="538 243 419 306" overflow="hidden"><polyline points="538.0,549.0 539.2,542.6 540.4,537.9 541.5,535.2 542.6,534.2 543.8,535.2 544.8,537.9 545.9,542.6 546.1,549.0 546.6,549.0 548.2,542.0 549.4,537.0 550.5,534.1 551.7,533.1 552.8,534.1 553.9,537.0 555.0,542.0 556.1,549.0 556.6,549.0 557.4,547.2 558.7,545.0 559.9,543.7 561.2,543.2 562.4,543.7 563.5,545.0 564.7,547.2 565.1,549.0 565.6,549.0 566.7,539.8 567.4,533.6 568.1,528.7 568.6,529.9 569.8,529.9 570.5,533.6 571.1,549.0 571.6,549.0 572.9,545.6 573.8,542.5 574.7,540.7 575.6,540.1 576.4,540.7 577.3,542.5 578.1,545.6 578.6,549.0 580.3,543.3 581.6,539.0 582.8,536.5 584.1,535.6 585.3,536.5 586.5,539.0 587.6,543.3 588.1,549.0 588.6,549.0 589.9,543.3 591.0,538.9 592.1,536.4 593.1,535.5 594.2,536.4 595.2,538.9 596.2,543.3 597.2,549.0 600.1,539.6 603.2,539.7 606.2,542.1 609.0,538.8 611.7,536.7 614.3,546.0 616.7,533.8 619.1,537.7 621.4,537.8 623.6,544.5 625.7,543.6 627.8,533.5 629.8,548.0 631.7,531.0 633.6,539.9 635.4,542.4 637.2,545.2 638.9,540.8 640.5,538.6 642.1,534.1 643.7,538.8 645.3,534.0 646.8,532.7 648.2,537.8 649.6,534.8 651.0,546.2 652.4,534.1 653.7,548.4 655.0,544.2 656.3,546.1 657.6,533.6 658.8,540.1 660.0,537.7 661.2,533.4 662.3,542.4 663.5,545.9 664.6,540.5 665.7,547.4 666.7,540.2 667.8,548.6 668.8,545.8 669.8,533.0 670.8,543.3 671.8,539.5 672.8,541.3 673.8,531.7 674.7,543.9 675.6,546.9 676.5,530.6 677.4,539.4 678.3,537.7 679.2,539.7 680.1,539.8 680.6,539.8 681.7,538.0 682.6,548.7 683.4,538.7 684.1,540.6 684.6,546.7 685.8,545.0 686.5,544.9 687.3,546.0 688.1,533.4 688.6,537.3 689.5,547.1 690.1,543.8 690.6,546.9 691.7,548.3 692.4,545.5 693.1,543.7 693.6,547.7 694.4,539.3 695.1,543.5 695.6,548.1 696.4,547.4 697.1,534.6 697.6,546.3 698.1,539.5 698.6,545.3 699.6,546.1 700.1,544.1 700.6,546.4 701.4,544.2 702.1,533.4 702.6,543.0 703.1,532.1 703.6,543.8 704.1,537.0 704.6,539.0 705.5,546.2 706.1,540.7 706.6,547.0 707.1,532.8 707.6,535.3 708.1,532.2 708.6,532.9 709.1,547.6 709.6,548.7 710.1,539.0 710.6,544.2 711.1,540.2 711.6,546.7 712.1,543.0 712.6,545.2 713.1,541.8 713.6,547.6 714.1,531.7 714.6,532.2 715.1,533.9 715.6,546.4 716.1,542.0 716.6,543.1 717.1,548.1 717.6,548.8 718.1,534.1 718.6,548.5 719.1,539.4 719.6,545.8 720.1,545.1 720.6,545.6 721.1,541.4 721.6,544.8 722.1,544.8 722.6,547.6 723.1,539.9 723.6,544.9 724.1,538.1 724.6,538.3 725.1,544.0 725.6,546.8 726.1,533.4 726.6,544.9 727.1,535.2 727.6,543.2 728.1,541.2 728.6,541.2 729.1,536.3 729.6,540.0 730.1,533.4 730.6,548.7 731.1,531.4 731.6,548.1 732.1,535.6 732.6,536.4 733.1,536.9 733.6,548.5 734.1,546.7 734.6,546.8 735.1,536.8 735.6,545.2 736.1,530.7 736.6,548.4 737.1,538.3 737.6,542.9 738.1,532.9 738.6,548.3 739.1,543.6 739.6,547.5 740.1,538.3 740.6,546.1 741.1,544.2 741.6,544.7 742.1,530.2 742.6,545.1 743.1,534.7 743.6,541.4 744.1,537.6 744.6,547.0 745.1,531.2 745.6,546.8 746.1,532.9 746.6,546.6 747.1,534.7 747.6,548.4 748.1,537.0 748.6,547.2 749.1,541.6 749.6,546.4 750.1,531.7 750.6,548.2 751.1,539.2 751.6,546.5 752.1,541.2 752.6,542.7 753.1,532.0 753.6,547.6 754.1,540.5 754.6,545.8 755.1,537.1 755.6,548.5 756.1,533.6 756.6,545.5 757.1,545.2 757.6,548.3 758.1,536.1 758.6,547.5 759.1,536.1 759.6,547.3 760.1,531.4 760.6,541.5 761.1,539.0 761.6,548.8 762.1,542.1 762.6,548.7 763.1,533.1 763.6,548.6 764.1,541.8 764.6,545.7 765.1,536.7 765.6,537.1 766.1,544.0 766.6,548.4 767.1,536.7 767.6,547.5 768.1,534.4 768.6,548.8 769.1,538.1 769.6,546.8 770.1,538.4 770.6,546.2 771.1,527.1 771.6,543.8 772.1,530.6 772.6,540.2 773.1,524.3 773.6,532.5 774.1,515.7 774.6,528.5 775.1,517.9 775.6,530.3 776.1,533.5 776.6,535.0 777.1,524.6 777.6,537.5 778.1,527.0 778.6,540.3 779.1,529.0 779.6,538.2 780.1,535.1 780.6,545.7 781.1,532.4 781.6,543.6 782.1,530.6 782.6,545.7 783.1,535.4 783.6,546.6 784.1,532.9 784.6,548.7 785.1,542.2 785.6,547.5 786.1,543.5 786.6,548.7 787.1,532.5 787.6,547.4 788.1,544.5 788.6,548.0 789.1,531.1 789.6,548.8 790.1,531.2 790.6,548.6 791.1,541.8 791.6,548.6 792.1,532.4 792.6,548.7 793.1,541.1 793.6,547.6 794.1,535.8 794.6,548.6 795.1,530.5 795.6,547.9 796.1,543.5 796.6,548.5 797.1,537.8 797.6,548.5 798.1,532.3 798.6,548.4 799.1,534.6 799.6,548.1 800.1,538.3 800.6,548.7 801.1,534.7 801.6,548.7 802.1,541.8 802.6,548.4 803.1,531.8 803.6,547.4 804.1,546.5 804.6,548.7 805.1,538.5 805.6,547.6 806.1,537.3 806.6,548.2 807.1,533.3 807.6,548.7 808.1,541.0 808.6,548.6 809.1,531.1 809.6,547.7 810.1,536.9 810.6,548.3 811.1,537.0 811.6,547.7 812.1,536.0 812.6,548.7 813.1,544.6 813.6,548.7 814.1,541.1 814.6,546.0 815.1,535.7 815.6,548.7 816.1,547.4 816.6,548.8 817.1,538.7 817.6,548.7 818.1,537.3 818.6,547.6 819.1,530.6 819.6,547.4 820.1,534.1 820.6,548.4 821.1,531.9 821.6,547.8 822.1,541.4 822.6,548.2 823.1,534.4 823.6,548.7 824.1,534.6 824.6,548.6 825.1,533.1 825.6,548.7 826.1,532.9 826.6,548.5 827.1,537.4 827.6,548.5 828.1,540.8 828.6,548.8 829.1,539.7 829.6,548.7 830.1,534.5 830.6,548.6 831.1,540.7 831.6,545.1 832.1,537.6 832.6,546.3 833.1,535.5 833.6,548.7 834.1,532.9 834.6,548.8 835.1,530.6 835.6,548.6 836.1,536.1 836.6,548.7 837.1,540.4 837.6,548.7 838.1,539.7 838.6,547.8 839.1,535.3 839.6,548.3 840.1,533.8 840.6,548.8 841.1,535.1 841.6,548.7 842.1,544.9 842.6,548.5 843.1,532.0 843.6,548.7 844.1,538.7 844.6,548.4 845.1,533.3 845.6,548.7 846.1,530.9 846.6,548.6 847.1,546.7 847.6,548.7 848.1,538.2 848.6,548.2 849.1,534.9 849.6,548.8 850.1,530.0 850.6,548.7 851.1,535.6 851.6,548.5 852.1,531.3 852.6,548.8 853.1,540.1 853.6,548.7 854.1,531.9 854.6,548.4 855.1,542.4 855.6,548.6 856.1,534.5 856.6,548.8 857.1,534.0 857.6,546.9 858.1,534.3 858.6,548.5 859.1,536.7 859.6,548.6 860.1,540.5 860.6,548.6 861.1,535.6 861.6,548.8 862.1,533.8 862.6,548.5 863.1,543.8 863.6,548.7 864.1,544.5 864.6,548.7 865.1,539.4 865.6,548.7 866.1,537.7 866.6,548.8 867.1,543.1 867.6,548.7 868.1,536.7 868.6,548.7 869.1,536.1 869.6,548.5 870.1,531.3 870.6,548.8 871.1,542.2 871.6,548.7 872.1,544.4 872.6,548.7 873.1,542.9 873.6,548.7 874.1,544.1 874.6,548.7 875.1,533.4 875.6,548.7 876.1,532.8 876.6,548.7 877.1,531.1 877.6,548.5 878.1,534.8 878.6,548.7 879.1,546.6 879.6,548.8 880.1,530.2 880.6,548.8 881.1,546.4 881.6,547.9 882.1,540.7 882.6,548.8 883.1,536.4 883.6,548.7 884.1,531.5 884.6,548.7 885.1,530.2 885.6,548.6 886.1,536.6 886.6,548.6 887.1,542.7 887.6,548.7 888.1,530.6 888.6,548.7 889.1,530.8 889.6,548.7 890.1,538.7 890.6,548.6 891.1,547.6 891.6,548.7 892.1,545.4 892.6,548.6 893.1,544.1 893.6,548.6 894.1,541.6 894.6,548.6 895.1,534.3 895.6,548.8 896.1,536.8 896.6,548.7 897.1,530.7 897.6,548.7 898.1,530.7 898.6,548.8 899.1,544.9 899.6,548.7 900.1,539.0 900.6,548.7 901.1,536.5 901.6,548.7 902.1,531.6 902.6,548.7 903.1,531.9 903.6,548.4 904.1,539.8 904.6,548.5 905.1,531.7 905.6,548.8 906.1,532.6 906.6,548.7 907.1,536.6 907.6,548.7 908.1,530.3 908.6,548.8 909.1,544.6 909.6,548.7 910.1,539.5 910.6,548.7 911.1,545.9 911.6,548.8 912.1,536.0 912.6,548.8 913.1,543.1 913.6,548.8 914.1,536.4 914.6,548.7 915.1,540.7 915.6,548.6 916.1,535.3 916.6,548.8 917.1,531.5 917.6,548.7 918.1,536.8 918.6,548.7 919.1,543.2 919.6,548.7 920.1,545.7 920.6,548.8 921.1,544.0 921.6,548.7 922.1,546.9 922.6,548.7 923.1,538.5 923.6,548.7 924.1,542.7 924.6,548.7 925.1,529.9 925.6,548.7 926.1,544.5 926.6,548.8 927.1,530.0 927.6,548.7 928.1,540.7 928.6,548.8 929.1,531.6 929.6,548.6 930.1,530.5 930.6,548.7 931.1,535.6 931.6,548.7 932.1,543.8 932.6,548.8 933.1,542.8 933.6,548.8 934.1,538.2 934.6,548.8 935.1,532.5 935.6,548.8 936.1,535.7 936.6,548.8 937.1,545.5 937.6,548.8 938.1,541.5 938.6,548.8 939.1,530.2 939.6,548.8 940.1,535.0 940.6,548.7 941.1,537.6 941.6,548.8 942.1,537.0 942.6,548.7 943.1,536.6 943.6,548.7 944.1,534.9 944.6,548.8 945.1,535.3 945.6,548.8 946.1,533.6 946.6,548.8 947.1,537.7 947.6,548.8 948.1,537.9 948.6,548.7 949.1,532.0 949.6,548.7 950.1,533.4 950.6,548.7 951.1,526.2 951.6,548.8 952.1,537.2 952.6,548.8 953.1,530.5 953.6,548.8 954.1,530.2 954.6,548.7 955.1,530.0 955.6,548.7 956.1,539.7 956.6,548.7 957.0,543.8" stroke="#5a70b8" stroke-width="0.7" opacity="0.8" fill="none" stroke-linejoin="bevel"/><polyline points="538.0,549.0 539.5,540.7 541.0,535.0 542.4,531.6 543.9,530.5 545.2,531.6 546.6,535.0 547.9,540.7 549.1,549.0 549.6,549.0 550.7,538.8 552.2,532.0 553.7,528.1 555.1,526.8 556.4,528.1 557.8,532.0 559.1,538.8 560.1,549.0 560.6,549.0 561.8,539.0 563.1,532.3 564.4,528.4 565.6,527.1 566.9,528.4 568.1,532.3 569.3,539.0 570.1,549.0 570.6,549.0 571.1,539.1 571.6,543.4 572.7,536.6 573.5,535.7 574.1,536.6 574.6,539.1 575.7,543.4 576.1,549.0 576.6,549.0 577.7,541.6 579.0,536.4 580.3,533.3 581.5,532.3 582.7,533.3 583.9,536.4 585.0,541.6 586.1,549.0 586.6,549.0 587.4,546.7 588.5,544.3 589.7,542.8 590.8,542.4 591.9,542.8 592.9,544.3 594.0,546.7 595.1,545.5 595.6,549.0 596.8,542.3 597.6,540.5 598.5,539.8 599.3,540.5 600.1,542.3 600.6,545.5 601.7,549.0 603.2,541.7 606.2,548.7 609.0,546.3 611.7,536.5 614.3,535.7 616.7,540.1 619.1,548.8 621.4,547.2 623.6,530.5 625.7,546.2 627.8,541.8 629.8,547.3 631.7,538.4 633.6,533.0 635.4,545.1 637.2,547.9 638.9,546.0 640.5,548.8 642.1,545.4 643.7,535.1 645.3,545.8 646.8,538.0 648.2,526.8 649.6,530.4 651.0,545.0 652.4,548.7 653.7,547.5 655.0,547.4 656.3,532.0 657.6,545.3 658.8,542.1 660.0,548.2 661.2,535.7 662.3,548.7 663.5,548.3 664.6,540.2 665.7,545.4 666.7,541.6 667.8,545.8 668.8,548.4 669.8,538.4 670.8,547.7 671.8,530.3 672.8,544.3 673.8,540.6 674.7,543.4 675.6,548.6 676.5,548.7 677.4,534.6 678.3,537.3 679.2,539.8 680.1,547.9 680.6,548.2 681.7,546.1 682.6,530.0 683.4,530.7 684.1,542.8 684.6,543.0 685.8,544.3 686.5,544.8 687.3,531.1 688.1,542.6 688.6,548.4 689.5,536.1 690.1,536.2 690.6,545.1 691.7,539.0 692.4,545.0 693.1,536.4 693.6,546.3 694.4,546.1 695.1,539.3 695.6,548.7 696.4,546.7 697.1,539.4 697.6,543.3 698.1,537.2 698.6,545.3 699.6,545.2 700.1,530.7 700.6,533.7 701.4,542.2 702.1,531.8 702.6,547.7 703.1,537.4 703.6,538.3 704.1,536.1 704.6,538.9 705.5,539.9 706.1,539.6 706.6,548.7 707.1,543.7 707.6,547.1 708.1,539.8 708.6,543.1 709.1,545.8 709.6,548.6 710.1,543.2 710.6,547.4 711.1,540.2 711.6,546.9 712.1,546.3 712.6,548.8 713.1,544.9 713.6,548.2 714.1,540.1 714.6,541.6 715.1,535.1 715.6,540.9 716.1,535.2 716.6,544.9 717.1,531.2 717.6,540.5 718.1,532.5 718.6,540.3 719.1,533.1 719.6,547.9 720.1,543.8 720.6,546.1 721.1,532.5 721.6,544.8 722.1,545.7 722.6,546.6 723.1,542.7 723.6,543.0 724.1,540.0 724.6,546.1 725.1,532.1 725.6,546.4 726.1,530.3 726.6,546.5 727.1,539.4 727.6,540.3 728.1,536.6 728.6,546.1 729.1,537.0 729.6,543.2 730.1,533.2 730.6,548.7 731.1,537.9 731.6,548.7 732.1,542.9 732.6,544.7 733.1,546.1 733.6,548.5 734.1,532.6 734.6,546.2 735.1,543.0 735.6,547.8 736.1,535.3 736.6,547.0 737.1,530.6 737.6,548.7 738.1,534.5 738.6,539.4 739.1,544.2 739.6,547.9 740.1,539.9 740.6,548.5 741.1,533.5 741.6,543.9 742.1,531.8 742.6,548.6 743.1,541.4 743.6,546.5 744.1,537.2 744.6,546.9 745.1,537.8 745.6,548.4 746.1,533.5 746.6,548.7 747.1,547.0 747.6,548.6 748.1,530.8 748.6,546.9 749.1,534.8 749.6,544.7 750.1,535.5 750.6,540.6 751.1,547.3 751.6,548.3 752.1,543.9 752.6,548.3 753.1,544.7 753.6,547.8 754.1,531.8 754.6,542.9 755.1,531.6 755.6,547.7 756.1,545.8 756.6,548.7 757.1,537.7 757.6,546.8 758.1,536.1 758.6,548.7 759.1,545.2 759.6,548.6 760.1,548.5 760.6,548.6 761.1,530.8 761.6,545.8 762.1,540.5 762.6,544.8 763.1,534.9 763.6,548.4 764.1,535.1 764.6,548.0 765.1,544.9 765.6,547.3 766.1,536.8 766.6,543.7 767.1,537.4 767.6,548.5 768.1,536.5 768.6,548.2 769.1,534.0 769.6,547.2 770.1,529.8 770.6,546.1 771.1,542.4 771.6,542.4 772.1,530.2 772.6,542.1 773.1,515.7 773.6,537.3 774.1,523.6 774.6,532.3 775.1,517.8 775.6,526.2 776.1,520.7 776.6,532.6 777.1,523.5 777.6,535.7 778.1,529.1 778.6,540.3 779.1,539.1 779.6,544.4 780.1,537.9 780.6,546.1 781.1,542.9 781.6,545.7 782.1,542.2 782.6,546.4 783.1,543.8 783.6,548.8 784.1,531.3 784.6,548.4 785.1,534.9 785.6,548.7 786.1,543.1 786.6,547.9 787.1,547.7 787.6,548.5 788.1,532.3 788.6,548.7 789.1,541.6 789.6,548.2 790.1,540.2 790.6,548.7 791.1,530.3 791.6,548.4 792.1,534.8 792.6,548.4 793.1,536.0 793.6,547.6 794.1,531.5 794.6,548.6 795.1,542.1 795.6,548.5 796.1,542.2 796.6,548.4 797.1,541.8 797.6,546.5 798.1,539.7 798.6,548.2 799.1,545.6 799.6,548.5 800.1,531.5 800.6,548.7 801.1,532.3 801.6,548.4 802.1,532.4 802.6,548.6 803.1,537.6 803.6,547.7 804.1,536.7 804.6,548.1 805.1,540.1 805.6,548.8 806.1,540.9 806.6,548.7 807.1,538.5 807.6,548.7 808.1,530.3 808.6,548.7 809.1,534.0 809.6,548.8 810.1,532.4 810.6,547.4 811.1,544.0 811.6,548.7 812.1,540.3 812.6,548.3 813.1,532.4 813.6,548.6 814.1,538.5 814.6,548.4 815.1,542.4 815.6,548.0 816.1,539.9 816.6,548.6 817.1,539.9 817.6,548.0 818.1,531.9 818.6,547.0 819.1,534.6 819.6,548.2 820.1,531.2 820.6,548.1 821.1,539.0 821.6,548.1 822.1,543.1 822.6,548.4 823.1,529.5 823.6,548.7 824.1,531.2 824.6,548.6 825.1,531.2 825.6,548.5 826.1,531.2 826.6,547.4 827.1,545.6 827.6,548.2 828.1,537.2 828.6,548.8 829.1,530.0 829.6,548.7 830.1,531.5 830.6,546.9 831.1,532.6 831.6,548.7 832.1,543.3 832.6,548.7 833.1,530.3 833.6,548.7 834.1,543.1 834.6,548.5 835.1,538.2 835.6,548.8 836.1,535.2 836.6,548.7 837.1,537.4 837.6,548.5 838.1,546.7 838.6,548.5 839.1,538.5 839.6,548.2 840.1,538.2 840.6,548.5 841.1,531.4 841.6,548.7 842.1,535.9 842.6,547.9 843.1,533.5 843.6,547.9 844.1,543.5 844.6,548.7 845.1,535.6 845.6,547.9 846.1,540.9 846.6,547.5 847.1,536.6 847.6,548.7 848.1,530.0 848.6,548.6 849.1,540.7 849.6,547.3 850.1,534.7 850.6,548.8 851.1,531.3 851.6,548.7 852.1,542.4 852.6,548.7 853.1,535.4 853.6,548.7 854.1,532.2 854.6,548.7 855.1,532.8 855.6,548.7 856.1,544.3 856.6,548.6 857.1,537.1 857.6,548.0 858.1,534.6 858.6,548.6 859.1,531.7 859.6,548.7 860.1,536.4 860.6,548.6 861.1,539.5 861.6,548.7 862.1,533.6 862.6,548.4 863.1,533.8 863.6,548.7 864.1,530.4 864.6,548.5 865.1,538.4 865.6,548.5 866.1,531.4 866.6,548.7 867.1,537.2 867.6,548.7 868.1,530.4 868.6,548.7 869.1,530.8 869.6,548.7 870.1,533.4 870.6,548.7 871.1,534.2 871.6,548.4 872.1,537.5 872.6,548.7 873.1,527.7 873.6,548.7 874.1,537.0 874.6,548.6 875.1,531.9 875.6,548.8 876.1,534.7 876.6,548.5 877.1,535.5 877.6,548.8 878.1,542.5 878.6,548.7 879.1,531.1 879.6,548.7 880.1,534.6 880.6,548.7 881.1,536.7 881.6,548.6 882.1,535.8 882.6,548.7 883.1,533.0 883.6,548.7 884.1,537.5 884.6,548.7 885.1,540.7 885.6,548.7 886.1,537.1 886.6,548.4 887.1,539.7 887.6,547.9 888.1,531.3 888.6,548.7 889.1,538.4 889.6,548.7 890.1,540.4 890.6,548.7 891.1,533.2 891.6,548.6 892.1,536.9 892.6,548.7 893.1,530.5 893.6,548.7 894.1,533.1 894.6,548.8 895.1,540.7 895.6,548.7 896.1,538.6 896.6,548.7 897.1,533.7 897.6,548.7 898.1,531.1 898.6,548.8 899.1,536.8 899.6,548.7 900.1,542.9 900.6,548.7 901.1,533.7 901.6,548.7 902.1,534.0 902.6,548.7 903.1,534.1 903.6,548.7 904.1,535.9 904.6,548.7 905.1,535.4 905.6,548.7 906.1,544.3 906.6,548.8 907.1,530.7 907.6,548.7 908.1,531.6 908.6,548.7 909.1,544.1 909.6,548.7 910.1,535.6 910.6,548.8 911.1,540.7 911.6,548.8 912.1,537.5 912.6,548.7 913.1,541.6 913.6,548.7 914.1,536.4 914.6,548.7 915.1,535.6 915.6,548.8 916.1,537.1 916.6,548.8 917.1,542.0 917.6,548.7 918.1,542.0 918.6,548.6 919.1,533.2 919.6,548.6 920.1,534.3 920.6,548.8 921.1,531.4 921.6,548.7 922.1,540.7 922.6,548.7 923.1,535.4 923.6,548.7 924.1,536.1 924.6,548.7 925.1,533.6 925.6,548.7 926.1,540.2 926.6,548.8 927.1,542.4 927.6,548.7 928.1,538.8 928.6,548.7 929.1,536.4 929.6,548.7 930.1,533.9 930.6,548.7 931.1,536.1 931.6,548.7 932.1,544.1 932.6,548.8 933.1,533.4 933.6,548.7 934.1,536.3 934.6,548.7 935.1,533.1 935.6,548.8 936.1,532.0 936.6,548.7 937.1,546.2 937.6,548.7 938.1,537.1 938.6,548.8 939.1,537.3 939.6,548.8 940.1,536.2 940.6,548.8 941.1,538.5 941.6,548.8 942.1,535.1 942.6,548.8 943.1,534.2 943.6,548.8 944.1,530.1 944.6,548.8 945.1,536.2 945.6,548.7 946.1,537.2 946.6,548.8 947.1,534.0 947.6,548.6 948.1,531.3 948.6,548.7 949.1,530.1 949.6,548.7 950.1,538.3 950.6,548.7 951.1,531.3 951.6,548.7 952.1,541.9 952.6,548.7 953.1,531.0 953.6,548.8 954.1,534.4 954.6,548.7 955.1,532.2 955.6,548.8 956.1,535.7 956.6,548.7 957.0,537.4" stroke="#b82c3c" stroke-width="0.8" opacity="0.9" fill="none" stroke-linejoin="bevel"/></svg><line x1="775.3" x2="775.3" y1="274.3" y2="549" stroke="#b03040" stroke-width="1.2"/><line x1="817.3" x2="817.3" y1="501.7" y2="549" stroke="#b03040" stroke-width="1.2"/><line x1="841.9" x2="841.9" y1="488.1" y2="549" stroke="#b03040" stroke-width="1.2"/><line x1="859.4" x2="859.4" y1="518.8" y2="549" stroke="#b03040" stroke-width="1.2"/><line x1="872.9" x2="872.9" y1="491.5" y2="549" stroke="#b03040" stroke-width="1.2"/><line x1="884.0" x2="884.0" y1="529.1" y2="549" stroke="#b03040" stroke-width="1.2"/><line x1="893.3" x2="893.3" y1="512.0" y2="549" stroke="#b03040" stroke-width="1.2"/></svg>
<div class="a" style="left:36px;top:234px;width:280px;height:63.5px;background:#1f3fb5;border-radius:0 32px 32px 0"></div>
<div class="a" style="left:49px;top:253px;font-size:24.5px;letter-spacing:0.1px;color:#fff;-webkit-text-stroke:0.25px #fff;white-space:nowrap;line-height:28px;transform:scaleY(0.93);transform-origin:0 22px">Distortion without A-wt</div>
<div class="a" style="left:36px;top:571px;width:931px;height:236.5px;background:#d9e3e4"></div>
<div class="a" style="left:36px;top:571.5px;width:931px;height:2px;background:#b8b2ad"></div>
<div class="a" style="left:36px;top:573.5px;width:931px;height:4px;background:#3a6b78"></div>
<div class="a" style="left:36px;top:577.5px;width:931px;height:15px;background:#d6d5d4"></div>
<div class="a" style="left:36px;top:592.5px;width:924px;height:2px;background:#a3a5a9"></div>
<div class="a" style="left:960px;top:578px;width:7px;height:17px;background:#e4e7e8"></div>
<div class="a" style="left:964px;top:582px;width:3px;height:3px;border-radius:50%;background:#2b3f90"></div><div class="a" style="left:962px;top:586px;width:5px;height:1px;background:#2b3f90"></div>
<div class="a" style="left:37px;top:581px;width:8px;height:8px;background:#34586a"><div class="a" style="left:3.3px;top:1px;width:1.4px;height:6px;background:#fff"></div><div class="a" style="left:1px;top:3.3px;width:6px;height:1.4px;background:#fff"></div></div>
<div class="a" style="left:500.5px;top:575px;width:1.5px;height:1.5px;background:#b8d0d6"></div><div class="a" style="left:504px;top:575px;width:1.5px;height:1.5px;background:#b8d0d6"></div><div class="a" style="left:507.5px;top:575px;width:1.5px;height:1.5px;background:#b8d0d6"></div>
<div class="a" style="left:48px;top:579px;font-size:9.5px;line-height:12px;color:#222;white-space:nowrap;-webkit-text-stroke:0.2px #222">Add Meter</div>
<div class="a" style="left:95px;top:584px;width:2px;height:2px;background:#333"></div>
<svg class="a" style="left:103.5px;top:579.8px" width="9" height="9" viewBox="0 0 9 9"><rect x="0.6" y="0.6" width="7.8" height="7.8" fill="#e2eaec" stroke="#3c5a68" stroke-width="1.2"/><rect x="5" y="0.6" width="3.4" height="7.8" fill="#23404e"/><path d="M3.2 4.5L6.2 2.8V6.2Z" fill="#fff"/><rect x="1.6" y="2" width="2.6" height="1" fill="#c9eef4"/></svg>
<div class="a" style="left:114px;top:579px;font-size:9.5px;line-height:12px;color:#222;white-space:nowrap;letter-spacing:-0.4px;-webkit-text-stroke:0.2px #222">Save Meter Data</div>
<div class="a" style="left:187px;top:581px;width:8px;height:8px;background:#34586a"><div class="a" style="left:2.5px;top:1.5px;width:0;height:0;border-left:4px solid #fff;border-top:2.5px solid transparent;border-bottom:2.5px solid transparent"></div></div>
<div class="a" style="left:197px;top:579px;font-size:9.5px;line-height:12px;color:#222;white-space:nowrap;letter-spacing:-0.3px;-webkit-text-stroke:0.2px #222">Regulate</div>
<div class="a" style="left:497px;top:594.5px;width:2px;height:212.5px;background:#a9abae"></div>
<div class="a" style="left:36px;top:699.25px;width:923px;height:3.25px;background:#a9abae"></div>
<div class="a" style="left:36px;top:594.5px;width:1.2px;height:212.5px;background:#9ea3a6"></div>
<div class="a" style="left:958.6px;top:594.5px;width:2.4px;height:212.5px;background:#a9abae"></div>
<div class="a" style="left:961px;top:594.5px;width:6px;height:212.5px;background:#e9ecee"></div>
<div class="a" style="left:40.5px;top:596.8px;font-size:10.5px;line-height:13px;font-weight:bold;color:#111;white-space:nowrap;">RMS Level</div><div class="a" style="left:96.5px;top:595.0px;width:47.5px;height:15px;background:#fbfbfb"></div><div class="a" style="left:99.0px;top:596.5px;font-size:9px;line-height:12px;color:#444;white-space:nowrap">Vrms</div><div class="a" style="left:139.0px;top:601.5px;width:2.2px;height:2px;background:#222"></div><div class="a" style="left:145.0px;top:598.0px;width:9px;height:8.5px;background:#2f4c5c"><div class="a" style="left:1px;top:2px;width:7px;height:1px;background:#e8eef0"></div><div class="a" style="left:1px;top:3.5px;width:7px;height:2px;background:#6d8ba0"></div><div class="a" style="left:1px;top:6px;width:7px;height:1px;background:#e8eef0"></div></div><div class="a" style="left:156.0px;top:601.5px;width:2px;height:2px;background:#222"></div><div class="a" style="left:161.5px;top:598.0px;width:9px;height:8.5px;background:#2a4657"><svg class="a" style="left:0;top:0" width="9" height="8.5" viewBox="0 0 9 8.5"><circle cx="4.5" cy="4.25" r="2.3" fill="none" stroke="#fff" stroke-width="1.9"/></svg></div><svg class="a" style="left:473px;top:598.5px" width="8" height="8" viewBox="0 0 8 8"><path d="M3.2 0.9H0.9V7.1H7.1V4.8" stroke="#2b3f90" stroke-width="1.5" fill="none"/><path d="M3.2 4.8L6 2" stroke="#2b3f90" stroke-width="1.5"/><path d="M4 0.4H7.6V4Z" fill="#2b3f90"/></svg><svg class="a" style="left:486.5px;top:599.0px" width="6" height="6" viewBox="0 0 6 6"><path d="M0.6 0.6L5.4 5.4M5.4 0.6L0.6 5.4" stroke="#1c2c3a" stroke-width="1.4"/></svg><div class="a" style="left:42.5px;top:621.3px;font-size:20px;line-height:24px;color:#1e1e1e;white-space:nowrap">Ch1</div><div class="a" style="left:145.5px;top:629.3px;width:0;height:0;border-left:4px solid transparent;border-right:4px solid transparent;border-top:7.5px solid #111"></div><div class="a" style="left:42.5px;top:664.3px;font-size:20px;line-height:24px;color:#1e1e1e;white-space:nowrap">Ch2</div><div class="a" style="left:145.5px;top:671.8px;width:0;height:0;border-left:4px solid transparent;border-right:4px solid transparent;border-top:7.5px solid #111"></div><div class="a" style="left:37px;top:653.0999999999999px;width:117px;height:1.5px;background:#b9bec1"></div><div class="a" style="left:154.4px;top:613.3px;width:337px;height:83px;background:#000"></div><div class="a" style="left:154.4px;top:641.6999999999999px;width:336.2px;height:26.3px;background:#878787"></div><div class="a" style="left:154.4px;top:641.6999999999999px;width:336.2px;height:1.3px;background:#b4b4b4"></div><div class="a" style="left:154.4px;top:652.9999999999999px;width:336.2px;height:1.7px;background:#a0a0a0"></div><div class="a" style="left:154.4px;top:654.6999999999999px;width:336.2px;height:1.3px;background:#e6e6e6"></div><div class="a" style="left:154.4px;top:666.4px;width:336.2px;height:1.6px;background:#b4b4b4"></div><div class="a" style="left:154.4px;top:642.9999999999999px;width:250.6px;height:10.0px;background:#0aeb0a"></div><div class="a" style="left:154.4px;top:646.4px;width:249.6px;height:1.8999999999999773px;background:#000"></div><div class="a" style="left:154.4px;top:655.9999999999999px;width:250.6px;height:10.400000000000091px;background:#0aeb0a"></div><div class="a" style="left:154.4px;top:660.6999999999999px;width:249.6px;height:1.7999999999999545px;background:#000"></div><div class="a" style="left:154.4px;top:615.5px;width:258.5px;text-align:right;letter-spacing:-0.5px;font-size:21.5px;line-height:26px;color:#24f024;white-space:nowrap;-webkit-text-stroke:0.2px #000">2.084</div><div class="a" style="left:154.4px;top:668.5px;width:258.5px;text-align:right;letter-spacing:-0.5px;font-size:21.5px;line-height:26px;color:#24f024;white-space:nowrap;-webkit-text-stroke:0.2px #000">2.068</div>
<div class="a" style="left:154.4px;top:615.5px;width:333.1px;text-align:right;letter-spacing:-0.5px;font-size:21.5px;line-height:26px;color:#24f024;white-space:nowrap;-webkit-text-stroke:0.2px #000">Vrms</div><div class="a" style="left:154.4px;top:668.5px;width:333.1px;text-align:right;letter-spacing:-0.5px;font-size:21.5px;line-height:26px;color:#24f024;white-space:nowrap;-webkit-text-stroke:0.2px #000">Vrms</div>
<div class="a" style="left:502.5px;top:596.8px;font-size:10.5px;line-height:13px;font-weight:bold;color:#111;white-space:nowrap;letter-spacing:0.45px;">THD+N Ratio</div><div class="a" style="left:575px;top:595.0px;width:41px;height:15px;background:#fbfbfb"></div><div class="a" style="left:577.5px;top:596.5px;font-size:9px;line-height:12px;color:#444;white-space:nowrap">%</div><div class="a" style="left:611px;top:601.5px;width:2.2px;height:2px;background:#222"></div><div class="a" style="left:617px;top:598.0px;width:9px;height:8.5px;background:#2f4c5c"><div class="a" style="left:1px;top:2px;width:7px;height:1px;background:#e8eef0"></div><div class="a" style="left:1px;top:3.5px;width:7px;height:2px;background:#6d8ba0"></div><div class="a" style="left:1px;top:6px;width:7px;height:1px;background:#e8eef0"></div></div><div class="a" style="left:628px;top:601.5px;width:2px;height:2px;background:#222"></div><div class="a" style="left:633.5px;top:598.0px;width:9px;height:8.5px;background:#2a4657"><svg class="a" style="left:0;top:0" width="9" height="8.5" viewBox="0 0 9 8.5"><circle cx="4.5" cy="4.25" r="2.3" fill="none" stroke="#fff" stroke-width="1.9"/></svg></div><svg class="a" style="left:935px;top:598.5px" width="8" height="8" viewBox="0 0 8 8"><path d="M3.2 0.9H0.9V7.1H7.1V4.8" stroke="#2b3f90" stroke-width="1.5" fill="none"/><path d="M3.2 4.8L6 2" stroke="#2b3f90" stroke-width="1.5"/><path d="M4 0.4H7.6V4Z" fill="#2b3f90"/></svg><svg class="a" style="left:948.5px;top:599.0px" width="6" height="6" viewBox="0 0 6 6"><path d="M0.6 0.6L5.4 5.4M5.4 0.6L0.6 5.4" stroke="#1c2c3a" stroke-width="1.4"/></svg><div class="a" style="left:504.5px;top:621.3px;font-size:20px;line-height:24px;color:#1e1e1e;white-space:nowrap">Ch1</div><div class="a" style="left:607.5px;top:629.3px;width:0;height:0;border-left:4px solid transparent;border-right:4px solid transparent;border-top:7.5px solid #111"></div><div class="a" style="left:504.5px;top:664.3px;font-size:20px;line-height:24px;color:#1e1e1e;white-space:nowrap">Ch2</div><div class="a" style="left:607.5px;top:671.8px;width:0;height:0;border-left:4px solid transparent;border-right:4px solid transparent;border-top:7.5px solid #111"></div><div class="a" style="left:499px;top:653.0999999999999px;width:117px;height:1.5px;background:#b9bec1"></div><div class="a" style="left:616.4px;top:613.3px;width:337px;height:83px;background:#000"></div><div class="a" style="left:616.4px;top:641.6999999999999px;width:336.2px;height:26.3px;background:#878787"></div><div class="a" style="left:616.4px;top:641.6999999999999px;width:336.2px;height:1.3px;background:#b4b4b4"></div><div class="a" style="left:616.4px;top:652.9999999999999px;width:336.2px;height:1.7px;background:#a0a0a0"></div><div class="a" style="left:616.4px;top:654.6999999999999px;width:336.2px;height:1.3px;background:#e6e6e6"></div><div class="a" style="left:616.4px;top:666.4px;width:336.2px;height:1.6px;background:#b4b4b4"></div><div class="a" style="left:616.4px;top:642.9999999999999px;width:8px;height:10.0px;background:#0aeb0a"></div><div class="a" style="left:620.4px;top:646.4px;width:332.2px;height:1.8999999999999773px;background:#000"></div><div class="a" style="left:616.4px;top:655.9999999999999px;width:9.7px;height:10.400000000000091px;background:#0aeb0a"></div><div class="a" style="left:622.1px;top:660.6999999999999px;width:330.5px;height:1.7999999999999545px;background:#000"></div><div class="a" style="left:616.4px;top:615.5px;width:299.2px;text-align:right;letter-spacing:-0.5px;font-size:21.5px;line-height:26px;color:#24f024;white-space:nowrap;-webkit-text-stroke:0.2px #000">0.000134</div><div class="a" style="left:616.4px;top:668.5px;width:299.2px;text-align:right;letter-spacing:-0.5px;font-size:21.5px;line-height:26px;color:#24f024;white-space:nowrap;-webkit-text-stroke:0.2px #000">0.000143</div>
<div class="a" style="left:616.4px;top:615.5px;width:333.0px;text-align:right;letter-spacing:-0.5px;font-size:21.5px;line-height:26px;color:#24f024;white-space:nowrap;-webkit-text-stroke:0.2px #000">%</div><div class="a" style="left:616.4px;top:668.5px;width:333.0px;text-align:right;letter-spacing:-0.5px;font-size:21.5px;line-height:26px;color:#24f024;white-space:nowrap;-webkit-text-stroke:0.2px #000">%</div>
<div class="a" style="left:40.5px;top:704.8px;font-size:10.5px;line-height:13px;font-weight:bold;color:#111;white-space:nowrap;">Frequency</div><div class="a" style="left:96.3px;top:703.0px;width:40px;height:15px;background:#fbfbfb"></div><div class="a" style="left:98.8px;top:704.5px;font-size:9px;line-height:12px;color:#444;white-space:nowrap">Hz</div><div class="a" style="left:131.3px;top:709.5px;width:2.2px;height:2px;background:#222"></div><div class="a" style="left:137.3px;top:706.0px;width:9px;height:8.5px;background:#2f4c5c"><div class="a" style="left:1px;top:2px;width:7px;height:1px;background:#e8eef0"></div><div class="a" style="left:1px;top:3.5px;width:7px;height:2px;background:#6d8ba0"></div><div class="a" style="left:1px;top:6px;width:7px;height:1px;background:#e8eef0"></div></div><div class="a" style="left:148.3px;top:709.5px;width:2px;height:2px;background:#222"></div><div class="a" style="left:153.8px;top:706.0px;width:9px;height:8.5px;background:#2a4657"><svg class="a" style="left:0;top:0" width="9" height="8.5" viewBox="0 0 9 8.5"><circle cx="4.5" cy="4.25" r="2.3" fill="none" stroke="#fff" stroke-width="1.9"/></svg></div><svg class="a" style="left:473px;top:706.5px" width="8" height="8" viewBox="0 0 8 8"><path d="M3.2 0.9H0.9V7.1H7.1V4.8" stroke="#2b3f90" stroke-width="1.5" fill="none"/><path d="M3.2 4.8L6 2" stroke="#2b3f90" stroke-width="1.5"/><path d="M4 0.4H7.6V4Z" fill="#2b3f90"/></svg><svg class="a" style="left:486.5px;top:707.0px" width="6" height="6" viewBox="0 0 6 6"><path d="M0.6 0.6L5.4 5.4M5.4 0.6L0.6 5.4" stroke="#1c2c3a" stroke-width="1.4"/></svg><div class="a" style="left:42.5px;top:730.75px;font-size:20px;line-height:24px;color:#1e1e1e;white-space:nowrap">Ch1</div><div class="a" style="left:145.5px;top:738.75px;width:0;height:0;border-left:4px solid transparent;border-right:4px solid transparent;border-top:7.5px solid #111"></div><div class="a" style="left:42.5px;top:773.75px;font-size:20px;line-height:24px;color:#1e1e1e;white-space:nowrap">Ch2</div><div class="a" style="left:145.5px;top:781.25px;width:0;height:0;border-left:4px solid transparent;border-right:4px solid transparent;border-top:7.5px solid #111"></div><div class="a" style="left:37px;top:762.55px;width:117px;height:1.5px;background:#b9bec1"></div><div class="a" style="left:154.4px;top:722.75px;width:337px;height:83px;background:#000"></div><div class="a" style="left:154.4px;top:751.15px;width:336.2px;height:26.3px;background:#878787"></div><div class="a" style="left:154.4px;top:751.15px;width:336.2px;height:1.3px;background:#b4b4b4"></div><div class="a" style="left:154.4px;top:762.4499999999999px;width:336.2px;height:1.7px;background:#a0a0a0"></div><div class="a" style="left:154.4px;top:764.15px;width:336.2px;height:1.3px;background:#e6e6e6"></div><div class="a" style="left:154.4px;top:775.85px;width:336.2px;height:1.6px;background:#b4b4b4"></div><div class="a" style="left:154.4px;top:752.4499999999999px;width:191.4px;height:10.0px;background:#0aeb0a"></div><div class="a" style="left:154.4px;top:755.85px;width:336.2px;height:1.8999999999999773px;background:#000"></div><div class="a" style="left:154.4px;top:765.4499999999999px;width:191.4px;height:10.400000000000091px;background:#0aeb0a"></div><div class="a" style="left:154.4px;top:770.15px;width:336.2px;height:1.7999999999999545px;background:#000"></div><div class="a" style="left:154.4px;top:724.95px;width:275.0px;text-align:right;letter-spacing:-0.5px;font-size:21.5px;line-height:26px;color:#24f024;white-space:nowrap;-webkit-text-stroke:0.2px #000">0.99999</div><div class="a" style="left:154.4px;top:777.95px;width:275.0px;text-align:right;letter-spacing:-0.5px;font-size:21.5px;line-height:26px;color:#24f024;white-space:nowrap;-webkit-text-stroke:0.2px #000">0.99999</div>
<div class="a" style="left:154.4px;top:724.95px;width:333.9px;text-align:right;letter-spacing:-0.5px;font-size:21.5px;line-height:26px;color:#24f024;white-space:nowrap;-webkit-text-stroke:0.2px #000">kHz</div><div class="a" style="left:154.4px;top:777.95px;width:333.9px;text-align:right;letter-spacing:-0.5px;font-size:21.5px;line-height:26px;color:#24f024;white-space:nowrap;-webkit-text-stroke:0.2px #000">kHz</div>
<div class="a" style="left:502.5px;top:704.8px;font-size:10.5px;line-height:13px;font-weight:bold;color:#111;white-space:nowrap;">SINAD</div><div class="a" style="left:540px;top:703.0px;width:39.2px;height:15px;background:#fbfbfb"></div><div class="a" style="left:542.5px;top:704.5px;font-size:9px;line-height:12px;color:#444;white-space:nowrap">dB</div><div class="a" style="left:574.2px;top:709.5px;width:2.2px;height:2px;background:#222"></div><div class="a" style="left:580.2px;top:706.0px;width:9px;height:8.5px;background:#2f4c5c"><div class="a" style="left:1px;top:2px;width:7px;height:1px;background:#e8eef0"></div><div class="a" style="left:1px;top:3.5px;width:7px;height:2px;background:#6d8ba0"></div><div class="a" style="left:1px;top:6px;width:7px;height:1px;background:#e8eef0"></div></div><div class="a" style="left:591.2px;top:709.5px;width:2px;height:2px;background:#222"></div><div class="a" style="left:596.7px;top:706.0px;width:9px;height:8.5px;background:#2a4657"><svg class="a" style="left:0;top:0" width="9" height="8.5" viewBox="0 0 9 8.5"><circle cx="4.5" cy="4.25" r="2.3" fill="none" stroke="#fff" stroke-width="1.9"/></svg></div><svg class="a" style="left:935px;top:706.5px" width="8" height="8" viewBox="0 0 8 8"><path d="M3.2 0.9H0.9V7.1H7.1V4.8" stroke="#2b3f90" stroke-width="1.5" fill="none"/><path d="M3.2 4.8L6 2" stroke="#2b3f90" stroke-width="1.5"/><path d="M4 0.4H7.6V4Z" fill="#2b3f90"/></svg><svg class="a" style="left:948.5px;top:707.0px" width="6" height="6" viewBox="0 0 6 6"><path d="M0.6 0.6L5.4 5.4M5.4 0.6L0.6 5.4" stroke="#1c2c3a" stroke-width="1.4"/></svg><div class="a" style="left:504.5px;top:730.75px;font-size:20px;line-height:24px;color:#1e1e1e;white-space:nowrap">Ch1</div><div class="a" style="left:607.5px;top:738.75px;width:0;height:0;border-left:4px solid transparent;border-right:4px solid transparent;border-top:7.5px solid #111"></div><div class="a" style="left:504.5px;top:773.75px;font-size:20px;line-height:24px;color:#1e1e1e;white-space:nowrap">Ch2</div><div class="a" style="left:607.5px;top:781.25px;width:0;height:0;border-left:4px solid transparent;border-right:4px solid transparent;border-top:7.5px solid #111"></div><div class="a" style="left:499px;top:762.55px;width:117px;height:1.5px;background:#b9bec1"></div><div class="a" style="left:616.4px;top:722.75px;width:337px;height:83px;background:#000"></div><div class="a" style="left:616.4px;top:751.15px;width:336.2px;height:26.3px;background:#878787"></div><div class="a" style="left:616.4px;top:751.15px;width:336.2px;height:1.3px;background:#b4b4b4"></div><div class="a" style="left:616.4px;top:762.4499999999999px;width:336.2px;height:1.7px;background:#a0a0a0"></div><div class="a" style="left:616.4px;top:764.15px;width:336.2px;height:1.3px;background:#e6e6e6"></div><div class="a" style="left:616.4px;top:775.85px;width:336.2px;height:1.6px;background:#b4b4b4"></div><div class="a" style="left:616.4px;top:752.4499999999999px;width:330.4px;height:10.0px;background:#0aeb0a"></div><div class="a" style="left:616.4px;top:755.85px;width:332.79999999999995px;height:1.8999999999999773px;background:#000;border-radius:0 1px 1px 0"></div><div class="a" style="left:616.4px;top:765.4499999999999px;width:328.8px;height:10.400000000000091px;background:#0aeb0a"></div><div class="a" style="left:616.4px;top:770.15px;width:331.2px;height:1.7999999999999545px;background:#000;border-radius:0 1px 1px 0"></div><div class="a" style="left:616.4px;top:724.95px;width:289.5px;text-align:right;letter-spacing:-0.5px;font-size:21.5px;line-height:26px;color:#24f024;white-space:nowrap;-webkit-text-stroke:0.2px #000">117.472</div><div class="a" style="left:616.4px;top:777.95px;width:289.5px;text-align:right;letter-spacing:-0.5px;font-size:21.5px;line-height:26px;color:#24f024;white-space:nowrap;-webkit-text-stroke:0.2px #000">116.900</div>
<div class="a" style="left:616.4px;top:724.95px;width:332.9px;text-align:right;letter-spacing:-0.5px;font-size:21.5px;line-height:26px;color:#24f024;white-space:nowrap;-webkit-text-stroke:0.2px #000">dB</div><div class="a" style="left:616.4px;top:777.95px;width:332.9px;text-align:right;letter-spacing:-0.5px;font-size:21.5px;line-height:26px;color:#24f024;white-space:nowrap;-webkit-text-stroke:0.2px #000">dB</div>
</body></html>
